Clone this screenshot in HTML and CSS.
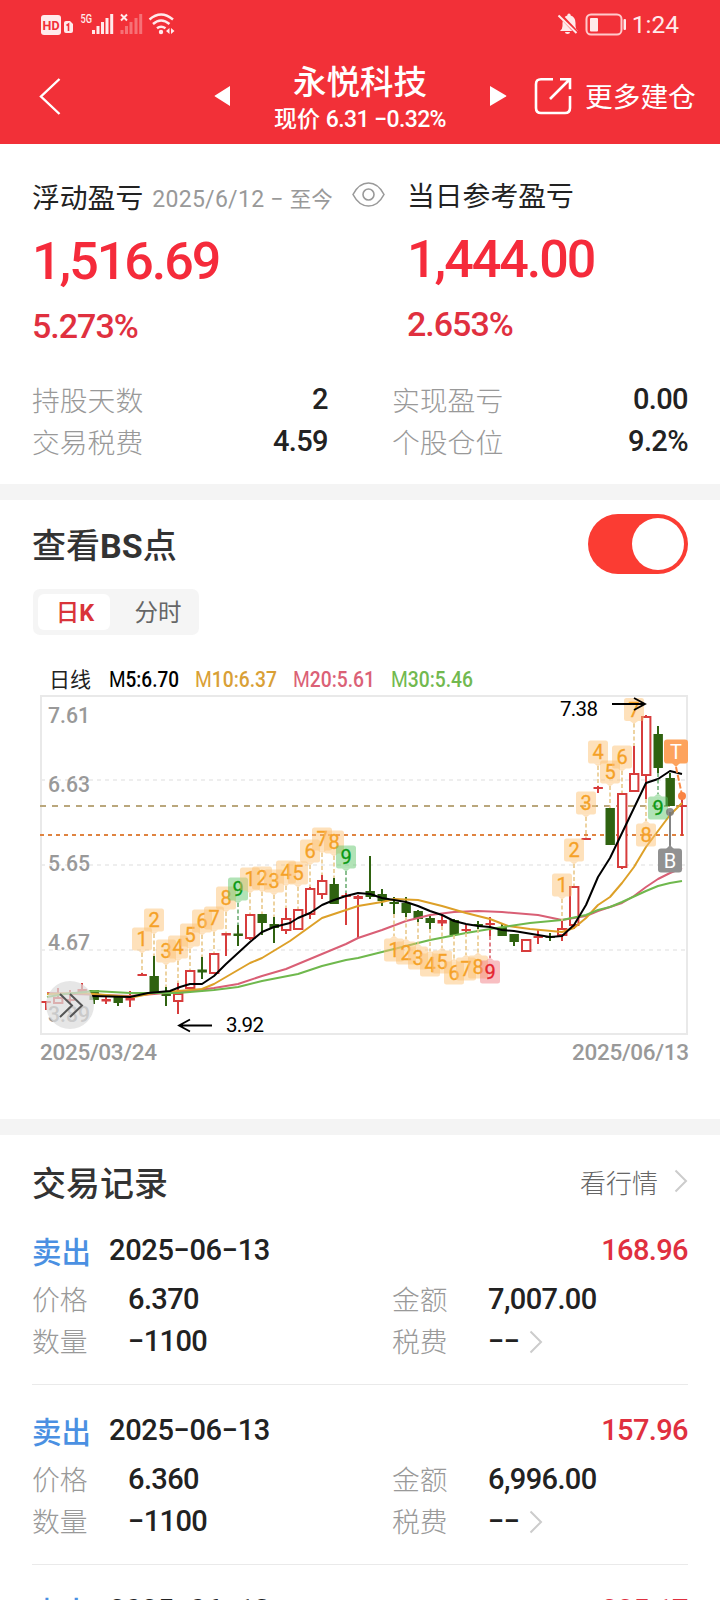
FILE: index.html
```html
<!DOCTYPE html>
<html lang="zh-CN">
<head>
<meta charset="utf-8">
<title>永悦科技</title>
<link rel="stylesheet" href="styles.css">
</head>
<body>
<header class="top">
  <div class="status">
    <svg class="status-left" width="136" height="24" viewBox="40 12 136 24" fill="#ffeaeb">
      <rect x="41" y="15" width="20" height="20" rx="3"/>
      <text class="hd" x="42.6" y="29.500" textLength="17" lengthAdjust="spacingAndGlyphs">HD</text>
      <path d="M64 23q0-2 2-2h4l3 3v7q0 2-2 2h-5q-2 0-2-2z"/>
      <path d="M66.500 25.500l2-1.500v7" fill="none" stroke="#f23038" stroke-width="1.600"/>
      <text class="net" x="80.500" y="23" textLength="11.500" lengthAdjust="spacingAndGlyphs">5G</text>
      <path d="M92 30h3v4h-3zM96.500 26h3v8h-3zM101 22h3v12h-3zM105.500 18h3v16h-3zM110.200 14h3v20h-3z"/>
      <path d="M121 14.500l6 6M127 14.500l-6 6" stroke="#ffeaeb" stroke-width="2"/>
      <path opacity=".35" d="M120.500 30h3v4h-3zM125 26h3v8h-3zM129.500 22h3v12h-3zM134.500 18h3v16h-3zM139.200 14h3v20h-3z"/>
      <g fill="none" stroke="#ffeaeb" stroke-width="2.400"><path d="M149.500 19.500Q161 9.500 173 19.500"/><path d="M153 24Q161 17 169.500 24"/><path d="M157 28.300Q161 25 165.500 28.300"/></g>
      <circle cx="161" cy="32" r="2.200"/><path d="M169.500 28v6l-3.500-3zM171 28v6l3.500-3z"/>
    </svg>
    <div class="status-right">
      <svg width="70" height="24" viewBox="559 12 70 24" fill="#ffeaeb">
        <path d="M562 31q2.500-2 2.500-5v-3q0-6 4.800-7.500 0-2 1.700-2t1.700 2q4.800 1.500 4.800 7.500v3q0 3 2.500 5zM567 32h5q0 2-2.500 2t-2.500-2z"/>
        <path d="M561 14l18 19" stroke="#f23038" stroke-width="4"/><path d="M560.500 15.500l18 17.500" stroke="#ffeaeb" stroke-width="2"/>
        <rect x="588.500" y="14.500" width="35" height="20" rx="4.500" fill="none" stroke="#ffc9cb" stroke-width="2"/>
        <rect x="592" y="18" width="8" height="13.500" rx="1"/><rect x="625.500" y="19" width="2.500" height="11" rx="1"/>
      </svg>
      <span class="clock">1:24</span>
    </div>
  </div>
  <div class="nav">
    <svg class="back" width="22" height="38" viewBox="0 0 22 38" fill="none" stroke="#fff" stroke-width="2.400"><path d="M20.500 2L2 19.500 20.500 37"/></svg>
    <svg class="prev" width="17" height="20" viewBox="0 0 17 20" fill="#fff"><path d="M16 0v20L1 10.600q-1-.6 0-1.200z"/></svg>
    <div class="stock"><div class="stock-name">永悦科技</div><div class="stock-price">现价 <span>6.31 −0.32%</span></div></div>
    <svg class="next" width="17" height="20" viewBox="0 0 17 20" fill="#fff"><path d="M0 0v20L16 10.600q1-.6 0-1.200z"/></svg>
    <svg class="share" width="38" height="38" viewBox="0 0 38 38" fill="none" stroke="#fff" stroke-width="2.600"><path d="M19 2.200H7q-5 0-5 5V31q0 5 5 5h24q5 0 5-5V19M16 22L35.500 2.500M26 2.200h10v10"/></svg>
    <span class="more">更多建仓</span>
  </div>
</header>

<section class="summary">
  <div class="profit">
    <div class="profit-col">
      <div class="profit-title">浮动盈亏<span class="range">2025/6/12 − <i>至今</i></span>
        <svg class="eye" width="33" height="25" viewBox="0 0 33 25" fill="none" stroke="#999" stroke-width="1.600"><path d="M1 12.500Q7 1 16.500 1T32 12.500Q26 24 16.500 24T1 12.500z"/><circle cx="16.500" cy="12.500" r="5.500"/></svg>
      </div>
      <div class="big">1,516.69</div>
      <div class="pct">5.273%</div>
    </div>
    <div class="profit-col right">
      <div class="profit-title">当日参考盈亏</div>
      <div class="big">1,444.00</div>
      <div class="pct">2.653%</div>
    </div>
  </div>
  <div class="stats">
    <div class="stat"><span class="label">持股天数</span><span class="num">2</span></div>
    <div class="stat"><span class="label">实现盈亏</span><span class="num">0.00</span></div>
    <div class="stat"><span class="label">交易税费</span><span class="num">4.59</span></div>
    <div class="stat"><span class="label">个股仓位</span><span class="num">9.2%</span></div>
  </div>
</section>

<section class="chart-section">
  <div class="chart-head"><h2>查看<b>BS</b>点</h2><div class="toggle"><div class="knob"></div></div></div>
  <div class="seg"><span class="seg-item on">日<b>K</b></span><span class="seg-item">分时</span></div>
  <svg id="chart" class="chart" width="720" height="406" viewBox="0 660 720 406"></svg>
</section>

<section class="records">
  <div class="records-head"><h2>交易记录</h2><span class="quote">看行情</span><svg class="chev" width="14" height="24" viewBox="0 0 14 24"><path d="M1.500 1.500L12 12 1.500 22.500"/></svg></div>
  <article class="record">
    <div class="rec-top"><span class="side">卖出</span><span class="num date">2025−06−13</span><span class="num gain">168.96</span></div>
    <div class="rec-row"><span class="label">价格</span><span class="num">6.370</span><span class="label">金额</span><span class="num">7,007.00</span></div>
    <div class="rec-row"><span class="label">数量</span><span class="num">−1100</span><span class="label">税费</span><span class="num">−−<svg class="chev" width="14" height="24" viewBox="0 0 14 24"><path d="M1.500 1.500L12 12 1.500 22.500"/></svg></span></div>
  </article>
  <article class="record">
    <div class="rec-top"><span class="side">卖出</span><span class="num date">2025−06−13</span><span class="num gain">157.96</span></div>
    <div class="rec-row"><span class="label">价格</span><span class="num">6.360</span><span class="label">金额</span><span class="num">6,996.00</span></div>
    <div class="rec-row"><span class="label">数量</span><span class="num">−1100</span><span class="label">税费</span><span class="num">−−<svg class="chev" width="14" height="24" viewBox="0 0 14 24"><path d="M1.500 1.500L12 12 1.500 22.500"/></svg></span></div>
  </article>
  <article class="record">
    <div class="rec-top"><span class="side">卖出</span><span class="num date">2025−06−13</span><span class="num gain">225.17</span></div>
  </article>
</section>
<script src="chart.js"></script>
</body>
</html>
```
FILE: styles.css
```css
* { box-sizing: border-box; }
body {
  margin: 0;
  width: 720px;
  height: 1600px;
  overflow: hidden;
  background: #fff;
  color: #222;
  font-family: Roboto, "Noto Sans CJK SC", sans-serif;
}
h2 { margin: 0; font-size: 34px; line-height: 40px; font-weight: 500; color: #333; }

.top { height: 144px; background: #f23038; color: #fff; }
.status { height: 48px; display: flex; justify-content: space-between; padding: 12px 41px 0 40px; }
.status-right { display: flex; gap: 5px; }
.clock { font-size: 24.500px; line-height: 26px; color: #ffeaeb; font-weight: 400; }
.hd { font: 700 12px Roboto, sans-serif; fill: #f23038; }
.net { font: 500 12px Roboto, sans-serif; }
.nav { height: 96px; display: flex; padding-left: 39px; }
.back { margin-top: 29px; }
.prev { margin: 38px 0 0 153px; }
.stock { width: 200px; margin-left: 29px; text-align: center; white-space: nowrap; }
.stock-name { margin-top: 16px; font-size: 33.5px; line-height: 38px; font-weight: 500; }
.stock-price { margin-top: 4px; font-size: 23px; line-height: 28px; font-weight: 500; }
.stock-price span { letter-spacing: -0.6px; }
.next { margin: 38px 0 0 30px; }
.share { margin: 29px 0 0 27px; }
.more { margin: 32px 0 0 13px; font-size: 27.700px; line-height: 36px; white-space: nowrap; }

.summary { height: 340px; padding: 34px 32px 0; }
.profit { display: flex; height: 203px; }
.profit-col { width: 375px; flex-shrink: 0; }
.profit-title { display: flex; align-items: center; height: 36px; font-size: 27.800px; white-space: nowrap; }
.range { margin: 2px 0 0 9px; font-size: 23px; color: #999; letter-spacing: 0.3px; }
.range i { font-style: normal; font-size: 21.500px; letter-spacing: 0; }
.eye { margin: -4px 0 0 19px; }
.big { margin-top: 18px; font-size: 52px; line-height: 60px; font-weight: 500; letter-spacing: -2px; color: #f52b3b; }
.pct { margin-top: 14px; font-size: 34px; line-height: 40px; font-weight: 500; letter-spacing: -1px; color: #e0303f; }
.right { margin-top: -2px; }
.stats { display: grid; grid-template-columns: 296px 296px; column-gap: 64px; }
.stat { height: 42px; display: flex; justify-content: space-between; align-items: center; }
.label { color: #999; font-size: 27.8px; line-height: 40px; font-weight: 300; }
.num { color: #222; font-size: 29px; line-height: 36px; font-weight: 500; letter-spacing: -0.6px; }
.date { letter-spacing: -0.350px; }
.stat .num { margin-bottom: 6px; }

.chart-section { height: 651px; border: solid #f4f4f4; border-width: 16px 0; }
.chart-head { display: flex; justify-content: space-between; align-items: center; padding: 14px 32px 0; height: 74px; }
.chart-head h2 { padding-top: 4px; }
.toggle { width: 100px; height: 60px; border-radius: 30px; background: #fb3c33; display: flex; justify-content: flex-end; padding: 4px; }
.knob { width: 52px; height: 52px; border-radius: 50%; background: #fff; }
.seg { display: flex; width: 166px; height: 46px; margin: 15px 0 0 33px; padding: 5px; border-radius: 7px; background: #f5f5f5; }
.seg-item { width: 84px; padding-left: 12px; text-align: center; font-size: 23.5px; line-height: 38px; color: #666; }
.seg-item.on { width: 72px; padding-left: 2px; background: #fff; border-radius: 6px; color: #d9343a; font-weight: 500; }
.chart { display: block; margin-top: 25px; }
.chart text { font-family: Roboto, "Noto Sans CJK SC", sans-serif; }
.chart .axis { font-size: 22.500px; font-weight: 500; fill: #999; }
.chart .legend { font-size: 22px; font-weight: 500; }
.chart .legend .m { font-weight: 400; }
.chart .price { font-size: 20.500px; fill: #000; }
.chart .tag { font-size: 20px; text-anchor: middle; font-weight: 400; }

.records { height: 465px; overflow: hidden; padding: 0 32px; }
.records-head { height: 92px; display: flex; align-items: center; padding-top: 6px; }
.quote { margin: -6px 16px 0 auto; font-size: 26px; color: #666; font-weight: 300; }
.records-head .chev { margin-top: -7px; }
.chev { fill: none; stroke: #ccc; stroke-width: 2; }
.record { height: 180px; padding-top: 3px; border-bottom: 1px solid #eaeaea; }
.records-head + .record { height: 158px; }
.record + .record { padding-top: 25px; }
.rec-top { display: flex; align-items: center; height: 40px; }
.side { width: 77px; font-size: 29.500px; font-weight: 500; color: #4a90e2; }
.gain { margin-left: auto; color: #e0303f; }
.rec-row { display: grid; grid-template-columns: 96px 264px 96px 200px; align-items: center; height: 42px; }
.rec-top + .rec-row { margin-top: 10px; }
.rec-row .num { margin-bottom: 4px; }
.rec-row .chev { margin-left: 10px; vertical-align: -3px; }
```
FILE: chart.js
```js
var out = [];
function add(s) { out.push(s); }

// Frame and grid
add('<path d="M41 696H687V1034H41Z" fill="none" stroke="#e9e9e9" stroke-width="2"/>');
[780, 865, 950].forEach(function (y) {
  add('<path d="M41 ' + y + 'H687" stroke="#e9e9e9" stroke-width="1.6" stroke-dasharray="4 4"/>');
});
add('<path d="M40 806H687" stroke="#baa77c" stroke-width="2" stroke-dasharray="6 6"/>');
add('<path d="M40 835H687" stroke="#df8340" stroke-width="2" stroke-dasharray="4 4"/>');

// Axis labels: text, baseline
var FIT = ' lengthAdjust="spacingAndGlyphs"';
[['7.61', 723], ['6.63', 791.5], ['5.65', 870.5], ['4.67', 950], ['3.89', 1022]].forEach(function (a) {
  add('<text class="axis" x="48" y="' + a[1] + '" textLength="42"' + FIT + '>' + a[0] + '</text>');
});
add('<text class="axis" x="40" y="1059.5" textLength="117">2025/03/24</text>');
add('<text class="axis" x="572" y="1059.5" textLength="117">2025/06/13</text>');

// Legend
add('<text x="49" y="686.5" font-size="21" fill="#222">日线</text>');
[[109, 70, '#000', '5:6.70'], [195, 82, '#d9a036', '10:6.37'], [293, 82, '#db6176', '20:5.61'], [391, 82, '#72b94f', '30:5.46']].forEach(function (l) {
  add('<text class="legend" x="' + l[0] + '" y="687" textLength="' + l[1] + '"' + FIT + ' fill="' + l[2] + '"><tspan class="m">M</tspan>' + l[3] + '</text>');
});

// Candles, oldest first: colour, body top, body bottom, high, low
var R = '#d73c3c', G = '#2f6210';
var candles = [
  ['r', 1001, 1003, 1001, 1010], ['r', 997, 1004, 988, 1004], ['r', 999, 1001, 990, 1003], ['r', 989, 993, 983, 993],
  ['g', 990, 1000, 990, 1004], ['r', 999, 1001.5, 996, 1004], ['g', 997, 1003, 997, 1006], ['r', 998, 1000.5, 991, 1007],
  ['r', 974, 976, 973, 976], ['g', 976, 992, 956, 992], ['g', 994, 996, 987, 1006], ['r', 993, 1002, 983, 1014],
  ['r', 970, 989, 970, 989], ['g', 969.5, 972.5, 957, 979], ['r', 953, 974, 953, 974], ['r', 933, 935.5, 933, 956],
  ['g', 933.5, 936, 925, 946], ['r', 914, 939, 914, 940], ['g', 914, 923, 914, 935], ['g', 924, 928, 917, 943],
  ['r', 918, 931, 908, 934], ['r', 909, 930, 909, 930], ['r', 888, 915, 887, 919], ['r', 880, 895, 875, 899],
  ['g', 884, 904, 878, 904], ['r', 895, 897, 893, 925], ['r', 896, 899, 895, 938], ['g', 891, 897, 856, 899],
  ['g', 894, 901, 889, 906], ['g', 902, 904, 897, 914], ['g', 903, 913, 897, 917], ['g', 911, 919, 910, 922],
  ['g', 918, 923, 916, 929], ['r', 920, 923.5, 914, 926], ['g', 920, 935, 919, 935], ['r', 929, 931, 925, 933],
  ['g', 924, 926, 921, 929], ['r', 923, 925, 917, 936], ['g', 927, 936, 924, 936], ['g', 934, 942, 934, 946],
  ['r', 939, 952, 939, 952], ['r', 936, 938, 929, 944], ['g', 936, 938, 933, 941], ['r', 928, 936, 921, 941],
  ['r', 886, 926, 886, 929], ['r', 838, 840, 838, 840], ['r', 787, 789, 786, 793], ['g', 808, 845, 808, 845],
  ['r', 793, 868, 793, 869], ['r', 773, 792, 746, 792], ['r', 716, 776, 715, 799], ['g', 734, 768, 726, 773],
  ['g', 778, 806, 773, 806], ['r', 805, 807, 795, 836]
];
candles.forEach(function (c, i) {
  var x = 46 + i * 12, col = c[0] === 'r' ? R : G;
  add('<path d="M' + x + ' ' + c[3] + 'V' + c[4] + '" stroke="' + col + '" stroke-width="2"/>');
  if (c[0] === 'r' && c[2] - c[1] > 5) {
    add('<rect x="' + (x - 4) + '" y="' + (c[1] + 1) + '" width="8.4" height="' + (c[2] - c[1] - 2) + '" fill="#fff" stroke="' + col + '" stroke-width="2"/>');
  } else {
    add('<rect x="' + (x - 4.5) + '" y="' + c[1] + '" width="9.4" height="' + (c[2] - c[1]) + '" fill="' + col + '"/>');
  }
});

// Moving averages
function line(points, col) {
  add('<polyline points="' + points + '" fill="none" stroke="' + col + '" stroke-width="2" stroke-linejoin="round"/>');
}
line('47,993 130,996 154,994 190,991 214,988 238,984 262,976 286,969 322,954 346,944 358,938 382,930 406,921 430,915 454,912 478,911 502,912 538,915 562,920 586,916 598,911 622,903 634,896 646,887 658,879 670,873 682,868', '#d95f75');
line('47,994 82,993 118,996 134,997 154,993 178,991 202,989 214,984 226,977 238,970 250,963 262,958 290,941 322,918 334,914 358,906 382,902 394,899 418,900 442,906 466,913 490,919 508,926 530,929 562,932 574,928 586,918 598,905 610,897 622,883 634,867 646,847 670,815 682,803', '#dda028');
line('47,997 65,994 94,991 130,993 178,993 214,990 238,987 262,981 298,974 322,966 346,960 358,958 394,949 430,940 466,933 490,929 530,923 562,920 586,915 598,910 610,907 622,902 646,891 658,886 670,883 682,881', '#6fb84d');
line('92,996 130,997 148,993 170,991 180,987 190,984 202,984 214,976 226,964 238,953 250,942 262,932 274,927 290,923 298,918 310,913 322,905 334,900 346,896 358,893 370,894 382,898 394,900 406,902 418,906 430,911 442,915 454,921 466,924 478,926 490,927 502,930 514,931 538,935 550,937 562,936 574,925 586,905 598,877 610,858 622,833 634,808 646,783 658,779 670,771 682,774', '#000');

// Count tags: x, centre y of the text, character, tone, 1 when it hangs below its candle
var tones = {
  o: ['rgba(253,193,112,.48)', '#f5a127', '#e9c98b'],
  g: ['rgba(92,196,103,.48)', '#0b9a14', '#6fae76'],
  r: ['rgba(240,120,125,.48)', '#e5252f', '#d9606a']
};
var tags = [
  [142, 939, 1], [154, 920, 2], [166, 951, 3], [178, 947, 4], [190, 935, 5], [202, 921, 6], [214, 918, 7], [226, 898, 8], [238, 889, 9, 'g'],
  [250, 879, 1], [262, 878, 2], [274, 881, 3], [286, 872, 4], [298, 873, 5], [310, 851, 6], [322, 839, 7], [334, 842, 8], [346, 857, 9, 'g'],
  [394, 950, 1, 'o', 1], [406, 953, 2, 'o', 1], [418, 958, 3, 'o', 1], [430, 965, 4, 'o', 1], [442, 962, 5, 'o', 1],
  [454, 973, 6, 'o', 1], [466, 969, 7, 'o', 1], [478, 967, 8, 'o', 1], [490, 972, 9, 'r', 1],
  [562, 885, 1], [574, 850, 2], [586, 803, 3], [598, 752, 4], [610, 772, 5], [622, 757, 6], [634, 709.5, 7],
  [646, 835, 8, 'o', 1], [658, 808, 9, 'g', 1]
];
tags.forEach(function (t) {
  var x = t[0], y = t[1], tone = tones[t[3] || 'o'], c = candles[(x - 46) / 12];
  var from = t[4] ? c[4] : y + 14, to = t[4] ? y - 14 : c[3];
  add('<path d="M' + x + ' ' + from + 'V' + to + '" stroke="' + tone[2] + '" stroke-width="1.6" stroke-dasharray="4 2.5"/>');
  add('<rect x="' + (x - 10) + '" y="' + (y - 11.5) + '" width="20" height="23" rx="2.5" fill="' + tone[0] + '"/>');
  add(t[4]
    ? '<path d="M' + (x - 4) + ' ' + (y - 11.5) + 'l4 -3 4 3z" fill="' + tone[0] + '"/>'
    : '<path d="M' + (x - 4) + ' ' + (y + 11.5) + 'l4 3 4 -3z" fill="' + tone[0] + '"/>');
  add('<text class="tag" x="' + x + '" y="' + (y + 7) + '" fill="' + tone[1] + '" stroke="' + tone[1] + '" stroke-width=".3">' + t[2] + '</text>');
});

// High and low callouts
add('<text class="price" x="560" y="715.5" textLength="38">7.38</text>');
add('<path d="M612 704H645M634 698L645 704 634 710" fill="none" stroke="#000" stroke-width="1.8"/>');
add('<text class="price" x="226" y="1031.5" textLength="38">3.92</text>');
add('<path d="M212 1025.500H179M190 1019.500L179 1025.500 190 1031.500" fill="none" stroke="#000" stroke-width="1.8"/>');

// Trade markers
add('<path d="M676 767L682 795" stroke="#fb8b45" stroke-width="2" stroke-dasharray="6 2"/><circle cx="682" cy="796" r="4" fill="#f98443"/>');
add('<rect x="664" y="739.500" width="24" height="24" rx="3" fill="#fda35d"/><path d="M672 763h8l-4 4z" fill="#fda35d"/><text class="tag" x="676" y="758.500" fill="#fff">T</text>');
add('<path d="M670 812V846" stroke="#777" stroke-width="1.8"/><circle cx="670" cy="812" r="4" fill="#777" opacity=".8"/>');
add('<rect x="658" y="848.500" width="24" height="24" rx="3" fill="#919191"/><path d="M666 849h8l-4-4z" fill="#919191"/><text class="tag" x="670" y="867.500" fill="#fff">B</text>');

// Expand button
add('<circle cx="70" cy="1005" r="24" fill="#dcdcdc" fill-opacity=".72"/><path d="M60 994L72 1005.500 60 1017M70 994L82 1005.500 70 1017" fill="none" stroke="#555" stroke-width="2"/>');

document.getElementById('chart').innerHTML = out.join('');
```
